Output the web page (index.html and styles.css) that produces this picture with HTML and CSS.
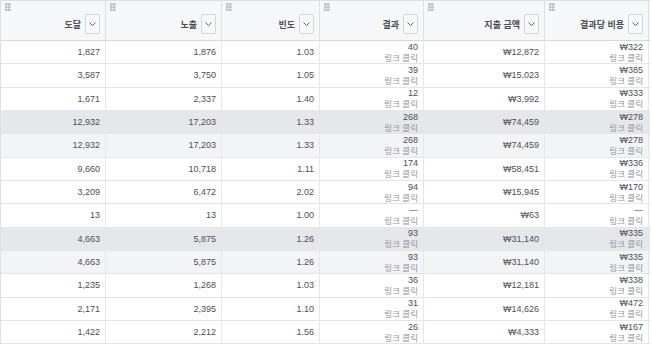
FILE: index.html
```html
<!DOCTYPE html>
<html lang="ko">
<head>
    <meta charset="UTF-8">
    <title>광고 성과</title>
    <link rel="stylesheet" href="styles.css">
</head>
<body>
    <div class="table">
        <div class="row head">
            <div class="th"><span class="grip"></span><div class="title">도달<span class="sort"><svg width="7" height="4" viewBox="0 0 7 4"><polyline points="0.5,0.5 3.5,3.5 6.5,0.5"/></svg></span></div></div>
            <div class="th"><span class="grip"></span><div class="title">노출<span class="sort"><svg width="7" height="4" viewBox="0 0 7 4"><polyline points="0.5,0.5 3.5,3.5 6.5,0.5"/></svg></span></div></div>
            <div class="th"><span class="grip"></span><div class="title">빈도<span class="sort"><svg width="7" height="4" viewBox="0 0 7 4"><polyline points="0.5,0.5 3.5,3.5 6.5,0.5"/></svg></span></div></div>
            <div class="th"><span class="grip"></span><div class="title">결과<span class="sort"><svg width="7" height="4" viewBox="0 0 7 4"><polyline points="0.5,0.5 3.5,3.5 6.5,0.5"/></svg></span></div></div>
            <div class="th"><span class="grip"></span><div class="title">지출 금액<span class="sort"><svg width="7" height="4" viewBox="0 0 7 4"><polyline points="0.5,0.5 3.5,3.5 6.5,0.5"/></svg></span></div></div>
            <div class="th"><span class="grip"></span><div class="title">결과당 비용<span class="sort"><svg width="7" height="4" viewBox="0 0 7 4"><polyline points="0.5,0.5 3.5,3.5 6.5,0.5"/></svg></span></div></div>
        </div>
        <div id="rows"></div>
    </div>

    <script>
        const data = [
            ['1,827', '1,876', '1.03', '40', '₩12,872', '₩322', ''],
            ['3,587', '3,750', '1.05', '39', '₩15,023', '₩385', ''],
            ['1,671', '2,337', '1.40', '12', '₩3,992', '₩333', ''],
            ['12,932', '17,203', '1.33', '268', '₩74,459', '₩278', 'dark'],
            ['12,932', '17,203', '1.33', '268', '₩74,459', '₩278', 'light'],
            ['9,660', '10,718', '1.11', '174', '₩58,451', '₩336', ''],
            ['3,209', '6,472', '2.02', '94', '₩15,945', '₩170', ''],
            ['13', '13', '1.00', '—', '₩63', '—', ''],
            ['4,663', '5,875', '1.26', '93', '₩31,140', '₩335', 'dark'],
            ['4,663', '5,875', '1.26', '93', '₩31,140', '₩335', 'light'],
            ['1,235', '1,268', '1.03', '36', '₩12,181', '₩338', ''],
            ['2,171', '2,395', '1.10', '31', '₩14,626', '₩472', ''],
            ['1,422', '2,212', '1.56', '26', '₩4,333', '₩167', '']
        ];

        const rows = document.getElementById('rows');
        data.forEach(function (r) {
            const row = document.createElement('div');
            row.className = 'row' + (r[6] ? ' ' + r[6] : '');
            row.innerHTML = `
                <div class="td">${r[0]}</div>
                <div class="td">${r[1]}</div>
                <div class="td">${r[2]}</div>
                <div class="td">${r[3]}<span class="sub">링크 클릭</span></div>
                <div class="td">${r[4]}</div>
                <div class="td">${r[5]}<span class="sub">링크 클릭</span></div>
            `;
            rows.appendChild(row);
        });
    </script>
</body>
</html>
```

FILE: styles.css
```css
body {
    margin: 0;
    padding: 0;
    background-color: #fff;
    font-family: 'Liberation Sans', 'Noto Sans CJK KR', sans-serif;
    font-size: 9px;
    color: #4b4f56;
}
.table {
    width: 649px;
    border-left: 1px solid #dddfe2;
    border-top: 1px solid #dddfe2;
}
.row {
    display: grid;
    grid-template-columns: 105px 116px 98px 104px 121px 104px;
    height: 23.33px;
    box-sizing: border-box;
    border-bottom: 1px solid #e3e5e8;
}
.row.dark {
    background-color: #e6e7ea;
}
.row.light {
    background-color: #f3f4f6;
}
.head {
    height: 40px;
    background-color: #f6f7f9;
    border-bottom: 1px solid #d5d8dc;
}
.th {
    display: flex;
    flex-direction: column;
    padding: 2px 5px 0 4px;
    border-right: 1px solid #dddfe2;
}
.grip {
    display: block;
    width: 6px;
    height: 8px;
    background-image: radial-gradient(circle, #aeb3ba 1px, transparent 1.3px);
    background-size: 3px 3px;
    background-position: -0.5px -0.5px;
}
.title {
    display: flex;
    align-items: center;
    justify-content: flex-end;
    margin-top: 3px;
    height: 20px;
    font-family: 'Noto Sans CJK KR', sans-serif;
    font-weight: bold;
    font-size: 9px;
    color: #4b4f56;
}
.sort {
    display: flex;
    align-items: center;
    justify-content: center;
    width: 15px;
    height: 20px;
    margin-left: 4px;
    box-sizing: border-box;
    border: 1px solid #d3d6db;
    border-radius: 2px;
    background-color: #f8f9fa;
}
.sort polyline {
    fill: none;
    stroke: #606770;
    stroke-width: 1;
}
.td {
    display: flex;
    flex-direction: column;
    justify-content: center;
    align-items: flex-end;
    padding: 0 5px;
    line-height: 10px;
    border-right: 1px solid #e6e7ea;
    white-space: nowrap;
}
.sub {
    font-family: 'Noto Sans CJK KR', sans-serif;
    font-size: 8.5px;
    color: #90949c;
    line-height: 11px;
}
```
